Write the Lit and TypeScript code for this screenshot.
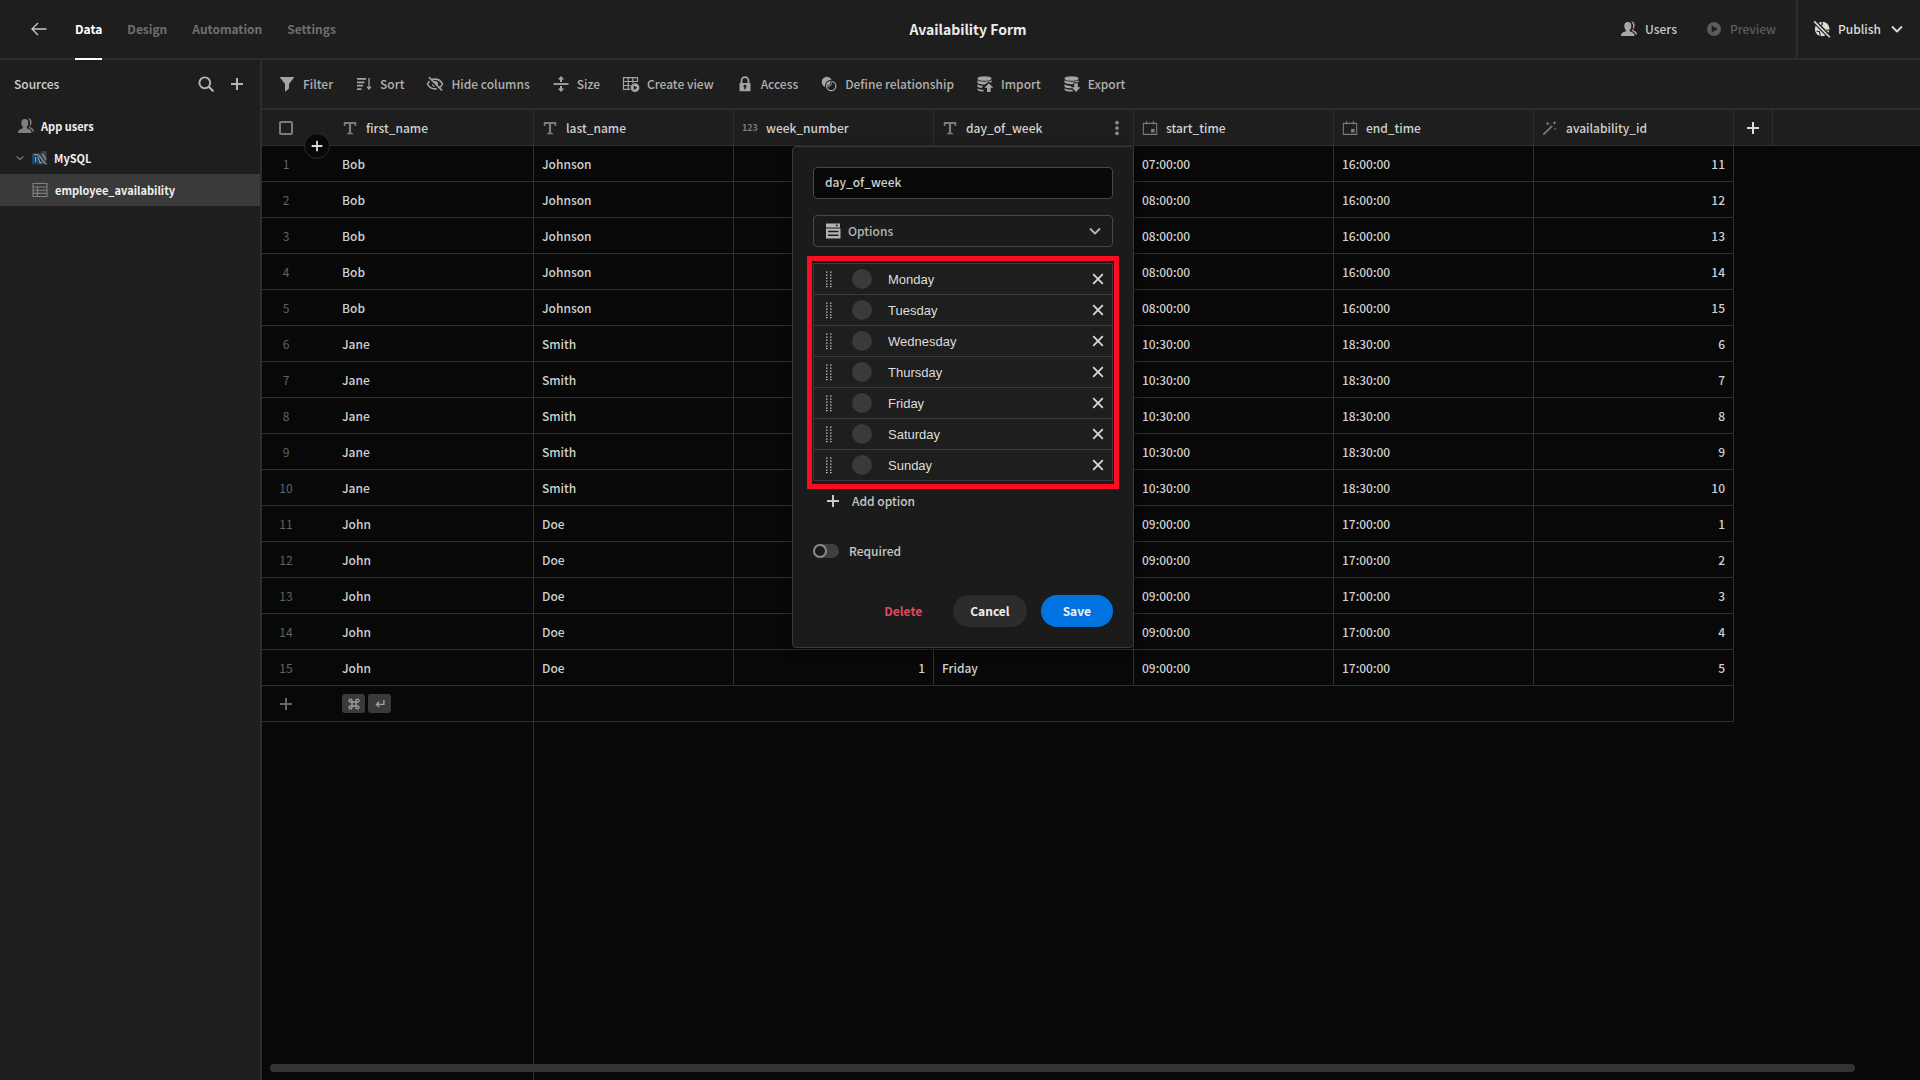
import { LitElement, html, css, svg, nothing, TemplateResult } from "lit";
import { customElement, state } from "lit/decorators.js";
import { classMap } from "lit/directives/class-map.js";

const SHAPES: Record<string, TemplateResult> = {
  back: svg`<path d="M16.5 9H2M8 3L2 9l6 6" fill="none" stroke="currentColor" stroke-width="1.4"/>`,
  plus: svg`<path d="M9 3v12M3 9h12" fill="none" stroke="currentColor" stroke-width="2"/>`,
  close: svg`<path d="M4.200 4.200l9.600 9.600M13.800 4.200l-9.600 9.600" fill="none" stroke="currentColor" stroke-width="1.800"/>`,
  chevron: svg`<path d="M4.500 7L9 11.500 13.500 7" fill="none" stroke="currentColor" stroke-width="1.800" stroke-linecap="round" stroke-linejoin="round"/>`,
  search: svg`<circle cx="7.800" cy="7.800" r="5.400" fill="none" stroke="currentColor" stroke-width="1.900"/><path d="M11.800 11.800l4 4" stroke="currentColor" stroke-width="2.200" stroke-linecap="round"/>`,
  users: svg`<path d="M7.800 2c2.300 0 3.500 1.600 3.500 3.900 0 1.600-.6 3-1.400 3.900-.5.600-.4 1.500.4 1.800 2.300.8 4.200 1.500 4.200 4.400H1c0-2.900 2-3.600 4.300-4.400.8-.3.900-1.200.4-1.800C4.900 8.900 4.300 7.500 4.300 5.900 4.300 3.600 5.500 2 7.800 2z"/><path d="M11 1.500c2.200-.3 3.600 1.300 3.600 3.700 0 1.500-.5 2.800-1.200 3.600-.4.600-.3 1.300.4 1.600 1.800.8 3.200 1.600 3.200 4.200h-1.500c-.5-1.900-1.700-2.800-3.700-3.500 1-1.300 1.300-3 1.300-4.600 0-2.200-.6-3.900-2.100-5z"/>`,
  play: svg`<path fill-rule="evenodd" d="M9 2a7 7 0 100 14A7 7 0 009 2zM6.700 5.400L13 9l-6.300 3.600z"/>`,
  globeStrike: svg`<circle cx="9.200" cy="9" r="7.300"/><path d="M8.500 1.500l1 2.500-1.500 2M3.500 11l3 .8.8 4M13.500 9.800l3 .7" fill="none" stroke="#1e1e1e" stroke-width="1.100"/><path d="M1.500 1.500l15.500 15.800" stroke="#1e1e1e" stroke-width="4.200"/><path d="M1.200 1.400l15.600 15.800" stroke="currentColor" stroke-width="1.600"/>`,
  filter: svg`<path d="M2.400 2h13.200c.4 0 .6.500.3.800L11 9v4.600L7.500 16.400c-.2.200-.5 0-.5-.3V9L2.100 2.800c-.3-.3-.1-.8.300-.8z"/>`,
  sort: svg`<path d="M2 3.900h9M2 7.300h7.500M2 10.700h6M2 14.100h4.500" stroke="currentColor" stroke-width="1.700"/><path d="M14 3v11M12 11.600l2 2.400 2-2.400" fill="none" stroke="currentColor" stroke-width="1.300"/>`,
  hide: svg`<path d="M1.500 9C3 6 5.700 4.100 9 4.100S15 6 16.500 9c-1.500 3-4.200 4.900-7.500 4.900S3 12 1.500 9z" fill="none" stroke="currentColor" stroke-width="1.600"/><circle cx="9" cy="9" r="3"/><path d="M1.600 2.900l13 13.100" stroke="#1e1e1e" stroke-width="2"/><path d="M2.800 2l13.300 13.500" stroke="currentColor" stroke-width="1.700"/>`,
  size: svg`<path d="M1.500 9h15" stroke="currentColor" stroke-width="1.800"/><path d="M9 1l3.200 3.500H10V7H8V4.500H5.800zM9 17l3.200-3.500H10V11H8v2.500H5.800z"/>`,
  view: svg`<path d="M15.500 7V2.600h-14v11.800H8M1.500 6.500h14M1.500 10.500h7M6.200 2.600v11.800M10.800 2.600V8" fill="none" stroke="currentColor" stroke-width="1.200"/><path fill-rule="evenodd" d="M13 8.300a4.400 4.400 0 100 8.800 4.400 4.400 0 000-8.800zm-1.300 2.100l3.500 2.300-3.500 2.300z"/>`,
  lock: svg`<path d="M5.500 8.500V5.700a3.500 3.500 0 017 0v2.800" fill="none" stroke="currentColor" stroke-width="1.800"/><path fill-rule="evenodd" d="M3.500 8h11v8.300h-11zM9 9.800a1.500 1.500 0 00-.8 2.800v1.700h1.600v-1.700A1.500 1.500 0 009 9.800z"/>`,
  relation: svg`<circle cx="6.900" cy="7" r="5.200"/><circle cx="11.200" cy="11" r="5.400" fill="none" stroke="#1e1e1e" stroke-width="1.600"/><circle cx="11.200" cy="11" r="4.700" fill="none" stroke="currentColor" stroke-width="1.200"/><path d="M6.900 11.200a5.200 5.200 0 004.200-5.100" fill="none" stroke="#1e1e1e" stroke-width="1"/>`,
  import: svg`<ellipse cx="8.500" cy="3.500" rx="7" ry="2.300"/><path d="M1.500 5.300c2.500 1.900 11.500 1.900 14 0v2.500l-2.800-1-4 2.600c-3 .1-5.900-.5-7.200-1.500zM1.500 9.300c1.500 1.200 3.600 1.600 5.600 1.700l-1.500 2.100c-1.700-.2-3.300-.6-4.100-1.300zM1.500 13.200c1.400 1.100 3.500 1.500 6 1.600v1.700c-3 0-6-.7-6-2.300z"/><path d="M12.800 8.300l4.500 4.500h-2.700v4.300H11v-4.300H8.300z"/>`,
  export: svg`<ellipse cx="8.500" cy="3.500" rx="7" ry="2.300"/><path d="M1.500 5.300c2.500 1.900 11.500 1.900 14 0v2H10.300v1.900c-3.500.2-7.300-.3-8.800-1.400zM1.500 9.300c1.500 1.200 4 1.600 6.300 1.700l1.500 2.300c-3 .1-6.400-.3-7.800-1.500zM1.500 13.200c1.700 1.200 4.500 1.600 7.500 1.600l1.300 1.500c-4 .5-8.800-.1-8.800-2.100z"/><path d="M11.200 8.300h3.600v4h2.700L13 17l-4.500-4.700h2.700z"/>`,
  text: svg`<path d="M2 2.300h14v4.400h-1.500c-.1-1.600-.7-2.200-2-2.200h-2.300v9c0 .8.600 1 2 1.100V16H5.800v-1.400c1.400-.1 2-.3 2-1.100v-9H5.500c-1.300 0-1.900.6-2 2.200H2z"/>`,
  calendar: svg`<path d="M1.500 3.800h15v12.400h-15zM5.200 1v4M12.800 1v4" fill="none" stroke="currentColor" stroke-width="1.200"/><path d="M10.200 10h4v4h-4z"/>`,
  wand: svg`<path d="M1.500 16.500L11.500 6.500" stroke="currentColor" stroke-width="2"/><path d="M6.500 1.500l.7 1.800 1.800.7-1.800.7-.7 1.800-.7-1.800L4 4l1.800-.7zM14 .8l.7 1.700 1.700.7-1.700.7L14 5.600l-.7-1.700-1.700-.7 1.700-.7zM14.800 8.300l.5 1.200 1.200.5-1.200.5-.5 1.200-.5-1.200-1.200-.5 1.200-.5z"/>`,
  more: svg`<circle cx="9" cy="3" r="2.100"/><circle cx="9" cy="9" r="2.100"/><circle cx="9" cy="15" r="2.100"/>`,
  table: svg`<path d="M2 2.500h14v13H2zM2 6h14M2 9.200h14M2 12.400h14M6.500 6v9.500" fill="none" stroke="currentColor" stroke-width="1.100"/>`,
  mysql: svg`<path d="M0 3.500h9.500V16H0z" fill="#1c4468"/><path d="M9.500 3.500l2-2.500h5v12l-3 3h-4z" fill="#3b4248"/><path d="M2 5.500c3.500-1.500 6 .3 8 3.200 1.600 2.300 3 5.300 6.500 7.500M4 8v5.500M6.500 8l2.700 6.500 2-.5M11.500 4.500c2 1.500 3 4 4 6.500" fill="none" stroke="#9aa3ab" stroke-width="1.200"/>`,
  options: svg`<path fill-rule="evenodd" d="M2 1.500h14V5.500H2zm9.300 1.200l1.600 1.700 1.600-1.700z"/><path fill-rule="evenodd" d="M2 6.500h14.500v10H2zm2 2.200v1.500h10.500V8.700zm0 3.900v1.500h10.500v-1.500z"/>`,
  drag: svg`${[6, 10].map((x) => [1.500, 4.500, 7.500, 10.500, 13.500, 16].map((y) => svg`<rect x=${x} y=${y} width="1.500" height="1.200"/>`))}`,
  enter: svg`<path d="M14 4v5.500H5M8 6L4.500 9.500 8 13" fill="none" stroke="currentColor" stroke-width="1.800"/>`,
  command: svg`<path d="M6 6h6v6H6zM6 6V4a2.200 2.200 0 10-2.200 2zM12 6h2a2.200 2.200 0 10-2-2.200zM12 12v2a2.200 2.200 0 102.200-2zM6 12H4a2.200 2.200 0 102 2.200z" fill="none" stroke="currentColor" stroke-width="2"/>`,
};

const icon = (name: string, size = 18) =>
  html`<svg class="icon" width=${size} height=${size} viewBox="0 0 18 18" fill="currentColor" aria-hidden="true">${SHAPES[name]}</svg>`;

const TOOLS: [string, string][] = [
  ["filter", "Filter"],
  ["sort", "Sort"],
  ["hide", "Hide columns"],
  ["size", "Size"],
  ["view", "Create view"],
  ["lock", "Access"],
  ["relation", "Define relationship"],
  ["import", "Import"],
  ["export", "Export"],
];

const COLUMNS: [string, string][] = [
  ["text", "first_name"],
  ["text", "last_name"],
  ["number", "week_number"],
  ["text", "day_of_week"],
  ["calendar", "start_time"],
  ["calendar", "end_time"],
  ["wand", "availability_id"],
];

const DAYS = ["Monday", "Tuesday", "Wednesday", "Thursday", "Friday", "Saturday", "Sunday"];

const people: [string, string, string, string, number][] = [
  ["Bob", "Johnson", "08:00:00", "16:00:00", 11],
  ["Jane", "Smith", "10:30:00", "18:30:00", 6],
  ["John", "Doe", "09:00:00", "17:00:00", 1],
];

const ROWS = people.flatMap(([first, last, start, end, id]) =>
  DAYS.slice(0, 5).map((day, i) => [first, last, 1, day, first === "Bob" && i === 0 ? "07:00:00" : start, end, id + i]),
);

@customElement("app-root")
export class AppRoot extends LitElement {
  static styles = css`
    :host {
      display: flex;
      flex-direction: column;
      min-height: 100vh;
      background: #080808;
      color: #c8c8c8;
      font-family: "Noto Sans CJK SC", "Source Sans Pro", sans-serif;
      font-size: 12px;
      font-weight: 500;
      line-height: 16px;
    }
    *, *::before, *::after { box-sizing: border-box; }
    button, input, select {
      font: inherit;
      color: inherit;
      background: none;
      border: 0;
      padding: 0;
      margin: 0;
      outline: 0;
    }
    button { display: flex; align-items: center; cursor: pointer; white-space: nowrap; }
    a { color: inherit; text-decoration: none; }
    .icon { display: block; flex: none; }

    .top {
      display: grid;
      grid-template-columns: 1fr auto 1fr;
      height: 60px;
      padding: 0 14px 0 30px;
      background: #1e1e1e;
      border-bottom: 2px solid #2c2c2c;
    }
    .tabs { display: flex; gap: 25px; font-weight: 700; color: #6f6f6f; }
    .tabs a { display: flex; align-items: center; margin-bottom: -2px; border-bottom: 2px solid transparent; }
    .tabs .current { color: #fff; border-bottom-color: #fff; }
    .back { margin-right: 2px; color: #c8c8c8; }
    .title { margin: 0; align-self: center; font-size: 14px; font-weight: 700; line-height: 20px; color: #ececec; }
    .actions { display: flex; justify-content: flex-end; }
    .actions button { gap: 7px; font-size: 12px; }
    .actions .users { margin-right: 28px; }
    .users svg { color: #a8a8a8; }
    .actions .preview { margin-right: 20px; color: #5c5c5c; }
    .actions .publish { padding-left: 15px; border-left: 2px solid #2c2c2c; color: #dcdcdc; }

    .body { flex: 1; display: grid; grid-template-columns: 262px minmax(0, 1fr); }
    .side { background: #1e1e1e; border-right: 2px solid #2c2c2c; }
    .side-head { display: flex; align-items: center; gap: 13px; height: 48px; margin-bottom: 2px; padding: 0 14px; color: #b4b4b4; }
    .side-head h2 { flex: 1; margin: 0; font-size: 12px; font-weight: 500; color: #d0d0d0; }
    .tree { display: flex; flex-direction: column; }
    .tree a { display: flex; align-items: center; gap: 6px; height: 32px; padding-left: 17px; font-size: 11px; font-weight: 700; color: #f0f0f0; }
    .tree svg { color: #808080; }
    .tree .source { padding-left: 14px; }
    .tree .leaf { padding-left: 31px; background: #3a3a3a; }

    .main { position: relative; display: flex; flex-direction: column; }
    .tools { display: flex; align-items: center; gap: 22px; height: 50px; padding: 0 16px; background: #1e1e1e; border-bottom: 2px solid #2c2c2c; color: #b0b0b0; }
    .tools button { gap: 7px; }
    .tools svg { color: #a4a4a4; }

    .grid { width: 100%; table-layout: fixed; border-collapse: separate; border-spacing: 0; }
    .gutter { width: 72px; }
    .col { width: 200px; }
    .extra { width: 39px; }
    th { position: relative; height: 36px; padding: 0; background: #1e1e1e; border-bottom: 1px solid #2f2f2f; border-right: 1px solid #2f2f2f; font-weight: 500; text-align: left; }
    th:first-child, th:last-child { border-right: 0; }
    .head { display: flex; align-items: center; gap: 8px; padding: 0 8px; color: #d0d0d0; }
    .head .label { flex: 1; }
    .head svg, .digits { color: #7c7c7c; }
    .digits { width: 16px; font-size: 9px; font-weight: 700; line-height: 12px; }
    .head .menu svg { color: #8c8c8c; }
    .check { display: block; appearance: none; width: 14px; height: 14px; margin: 0 0 0 17px; border: 2px solid #7c7c7c; border-radius: 2px; }
    .insert { position: absolute; z-index: 1; left: 42px; top: 23px; width: 26px; height: 26px; justify-content: center; border: 1px solid #2c2c2c; border-radius: 50%; background: #080808; color: #dcdcdc; }
    .add-col { width: 100%; justify-content: center; color: #dcdcdc; }

    td { height: 36px; padding: 0 8px; border-right: 1px solid #2f2f2f; border-bottom: 1px solid #2f2f2f; color: #d0d0d0; }
    .num { padding: 0 24px 0 0; border-right: 0; text-align: center; font-weight: 400; color: #636363; }
    .num button { width: 100%; justify-content: center; }
    .right { text-align: right; }
    .blank { border: 0; }
    .keys { display: flex; gap: 3px; }
    kbd { display: flex; align-items: center; justify-content: center; width: 23px; height: 19px; border-radius: 3px; background: #3a3a3a; color: #a0a0a0; }
    .rest { flex: 1; width: 272px; border-right: 1px solid #2f2f2f; }
    .scroll { position: absolute; left: 8px; right: 8px; bottom: 8px; height: 8px; }
    .thumb { height: 8px; border-radius: 4px; background: #333; }

    .popover { position: absolute; z-index: 2; top: 36px; right: -1px; width: 342px; display: flex; flex-direction: column; gap: 16px; padding: 20px; border: 1px solid #3a3a3a; border-radius: 4px; background: #1b1b1b; color: #c8c8c8; box-shadow: 0 2px 8px #0006; }
    .field { width: 100%; height: 32px; padding: 0 11px 4px; border: 1px solid #484848; border-radius: 4px; background: #080808; color: #d0d0d0; }
    .picker { display: flex; align-items: center; height: 32px; padding: 0 8px 0 10px; border: 1px solid #484848; border-radius: 4px; color: #b4b4b4; }
    .picker select { flex: 1; appearance: none; padding-left: 6px; }
    .options { position: relative; display: flex; flex-direction: column; border: 1px solid #3a3a3a; border-bottom: 0; background: #1e1e1e; }
    .options::after { content: ""; position: absolute; inset: -8px -7px; border: 5px solid #ff0b20; pointer-events: none; }
    .option { display: flex; align-items: center; height: 31px; padding: 0 5px 0 6px; border-bottom: 1px solid #3a3a3a; }
    .option .swatch { width: 20px; height: 20px; margin: 0 16px 0 14px; border-radius: 50%; background: #3a3a3a; }
    .option input { flex: 1; min-width: 0; padding-top: 2px; color: #dcdcdc; font-family: "Liberation Sans", Arial, sans-serif; font-size: 13px; font-weight: 400; }
    .option button { color: #d8d8d8; }
    .add { align-self: flex-start; gap: 10px; height: 32px; margin: -12px 0 0 11px; }
    .toggle { display: flex; align-items: center; gap: 10px; height: 32px; margin-top: 2px; }
    .switch { appearance: none; display: block; width: 26px; height: 14px; border-radius: 7px; background: #3f3f3f; }
    .switch::before { content: ""; display: block; width: 14px; height: 14px; border: 2px solid #8a8a8a; border-radius: 50%; background: #1b1b1b; }
    .switch:checked::before { margin-left: 12px; }
    .buttons { display: flex; justify-content: flex-end; gap: 14px; margin-top: 12px; font-weight: 700; }
    .buttons button { height: 32px; padding: 0 17px; border-radius: 16px; color: #f0f0f0; }
    .buttons .delete { color: #dc4c5c; }
    .buttons .cancel { background: #2c2c2c; }
    .buttons .save { padding: 0 22px; background: #0073e0; }
  `;

  @state() private options = DAYS;

  private popover() {
    return html`
      <div class="popover" role="dialog" aria-label="day_of_week">
        <input class="field" aria-label="Name" .value=${"day_of_week"} />
        <div class="picker">
          ${icon("options")}
          <select aria-label="Type"><option>Options</option></select>
          ${icon("chevron")}
        </div>
        <div class="options">
          ${this.options.map(
            (day) => html`<div class="option">
              ${icon("drag")}
              <button class="swatch" aria-label="Colour of ${day}"></button>
              <input aria-label="Option" .value=${day} />
              <button aria-label="Remove ${day}" @click=${() => (this.options = this.options.filter((d) => d !== day))}>${icon("close")}</button>
            </div>`,
          )}
        </div>
        <button class="add">${icon("plus")}Add option</button>
        <label class="toggle"><input class="switch" type="checkbox" />Required</label>
        <div class="buttons">
          <button class="delete">Delete</button>
          <button class="cancel">Cancel</button>
          <button class="save">Save</button>
        </div>
      </div>
    `;
  }

  private header([kind, name]: [string, string]) {
    const open = name === "day_of_week";
    return html`<th class="col">
      <div class="head">
        ${kind === "number" ? html`<span class="digits">123</span>` : icon(kind, 16)}
        <span class="label">${name}</span>
        ${open ? html`<button class="menu" aria-label="Column menu">${icon("more", 16)}</button>` : nothing}
      </div>
      ${open ? this.popover() : nothing}
    </th>`;
  }

  render() {
    return html`
      <header class="top">
        <nav class="tabs">
          <a class="back" href="#" aria-label="Back">${icon("back")}</a>
          ${["Data", "Design", "Automation", "Settings"].map((t, i) => html`<a class=${classMap({ current: i === 0 })} href="#">${t}</a>`)}
        </nav>
        <h1 class="title">Availability Form</h1>
        <div class="actions">
          <button class="users">${icon("users")}Users</button>
          <button class="preview">${icon("play")}Preview</button>
          <button class="publish">${icon("globeStrike")}Publish${icon("chevron")}</button>
        </div>
      </header>
      <div class="body">
        <aside class="side">
          <div class="side-head">
            <h2>Sources</h2>
            <button aria-label="Search">${icon("search")}</button>
            <button aria-label="Add source">${icon("plus")}</button>
          </div>
          <nav class="tree">
            <a href="#">${icon("users")}App users</a>
            <a class="source" href="#">${icon("chevron", 12)}${icon("mysql", 16)}MySQL</a>
            <a class="leaf" href="#">${icon("table")}employee_availability</a>
          </nav>
        </aside>
        <main class="main">
          <div class="tools">${TOOLS.map(([name, label]) => html`<button>${icon(name)}${label}</button>`)}</div>
          <table class="grid">
            <thead>
              <tr>
                <th class="gutter">
                  <input class="check" type="checkbox" aria-label="Select all rows" />
                  <button class="insert" aria-label="Insert row">${icon("plus", 16)}</button>
                </th>
                ${COLUMNS.map((c) => this.header(c))}
                <th class="extra"><button class="add-col" aria-label="Add column">${icon("plus")}</button></th>
                <th></th>
              </tr>
            </thead>
            <tbody>
              ${ROWS.map(
                (row, i) => html`<tr>
                  <td class="num">${i + 1}</td>
                  ${row.map((v) => html`<td class=${classMap({ right: typeof v === "number" })}>${v}</td>`)}
                  <td class="blank" colspan="2"></td>
                </tr>`,
              )}
              <tr>
                <td class="num"><button aria-label="Add row">${icon("plus")}</button></td>
                <td><div class="keys"><kbd>${icon("command", 12)}</kbd><kbd>${icon("enter", 14)}</kbd></div></td>
                <td colspan="6"></td>
                <td class="blank" colspan="2"></td>
              </tr>
            </tbody>
          </table>
          <div class="rest"></div>
          <div class="scroll"><div class="thumb" style="width:96.5%"></div></div>
        </main>
      </div>
    `;
  }
}
